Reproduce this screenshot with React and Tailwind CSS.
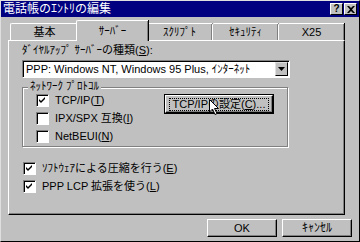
import React from 'react'

const jp = { fontFamily: '"Liberation Sans", "Noto Sans CJK JP", sans-serif' }

function Check({ checked, label }) {
  return (
    <div className="flex items-center gap-[6px] h-[18px] whitespace-nowrap">
      <div className="w-[13px] h-[13px] shrink-0 bg-white border-t border-l border-t-[#808080] border-l-[#808080] border-b border-r border-b-white border-r-white flex items-center justify-center shadow-[inset_1px_1px_0_#000]">
        {checked && (
          <svg width="9" height="9" viewBox="0 0 9 9">
            <path d="M1 3 L3 5 L7 1 L7 3 L3 7 L1 5 Z" fill="#000" />
          </svg>
        )}
      </div>
      <span className="text-[11px] text-black leading-none">{label}</span>
    </div>
  )
}

function Tab({ label, w, active }) {
  if (active) {
    return (
      <div className={`${w} h-[21px] -mb-[1px] -mx-[2px] z-10 bg-[#c0c0c0] border-l border-t border-white rounded-tl-[2px] shadow-[inset_-1px_0_0_#808080,1px_0_0_#000] flex items-center justify-center text-[11px] relative whitespace-nowrap`}>
        {label}
      </div>
    )
  }
  return (
    <div className={`${w} h-[17px] bg-[#c0c0c0] border-l border-t border-white rounded-tl-[2px] shadow-[inset_-1px_0_0_#808080,1px_0_0_#000] flex items-center justify-center text-[11px] whitespace-nowrap`}>
      {label}
    </div>
  )
}

function Button({ children, w, focused }) {
  return (
    <div className={`${w} h-[18px] bg-[#c0c0c0] border-t border-l border-white border-r border-b border-r-black border-b-black shadow-[inset_-1px_-1px_0_#808080] flex items-center justify-center text-[11px] whitespace-nowrap`}>
      {focused ? <div className="border border-dotted border-black px-[3px] leading-[11px]">{children}</div> : children}
    </div>
  )
}

export default function App() {
  return (
    <div style={jp} className="w-[360px] h-[242px] bg-[#c0c0c0] border-l border-t border-[#dfdfdf] border-r border-b border-r-black border-b-black overflow-hidden relative select-none">
      <div className="h-[16px] bg-[#000080] flex items-center justify-between pl-[2px] pr-[2px]">
        <span className="text-white text-[12px] leading-none">電話帳のｴﾝﾄﾘの編集</span>
        <div className="flex gap-[1px]">
          <div className="w-[13px] h-[12px] bg-[#c0c0c0] border-t border-l border-white border-r border-b border-r-black border-b-black text-[10px] font-bold flex items-center justify-center leading-none">?</div>
          <div className="w-[13px] h-[12px] bg-[#c0c0c0] border-t border-l border-white border-r border-b border-r-black border-b-black flex items-center justify-center">
            <svg width="8" height="7" viewBox="0 0 8 7"><path d="M0 0h2l2 2 2-2h2L5 3.5 8 7H6L4 5 2 7H0l3-3.5z" fill="#000" /></svg>
          </div>
        </div>
      </div>

      <div className="px-[7px] pt-[2px]">
        <div className="flex items-end h-[21px] pl-[2px]">
          <Tab label="基本" w="w-[68px]" />
          <Tab label="ｻｰﾊﾞｰ" w="w-[72px]" active />
          <Tab label="ｽｸﾘﾌﾟﾄ" w="w-[66px]" />
          <Tab label="ｾｷｭﾘﾃｨ" w="w-[66px]" />
          <Tab label="X25" w="w-[66px]" />
        </div>
        <div className="w-[337px] h-[175px] border-t border-l border-white border-r border-b border-r-black border-b-black shadow-[inset_-1px_-1px_0_#808080] px-[13px] pt-[4px]">
          <div className="text-[11px] leading-none h-[13px] whitespace-nowrap">ﾀﾞｲﾔﾙｱｯﾌﾟ ｻｰﾊﾞｰの種類(<u>S</u>):</div>
          <div className="mt-[2px] w-[268px] h-[18px] bg-white border-t border-l border-[#808080] border-r border-b border-r-white border-b-white shadow-[inset_1px_1px_0_#000] flex items-center justify-between pl-[3px] pr-[1px]">
            <span className="text-[11px] leading-none whitespace-nowrap">PPP: Windows NT, Windows 95 Plus, ｲﾝﾀｰﾈｯﾄ</span>
            <div className="w-[13px] h-[14px] bg-[#c0c0c0] border-t border-l border-[#dfdfdf] border-r border-b border-r-black border-b-black flex items-center justify-center">
              <svg width="7" height="4" viewBox="0 0 7 4"><path d="M0 0h7L3.5 4z" fill="#000" /></svg>
            </div>
          </div>

          <div className="relative mt-[9px] w-[266px] h-[60px] border border-[#808080] shadow-[1px_1px_0_#fff,inset_1px_1px_0_#fff] pl-[13px] pt-[3px]">
            <span className="absolute -top-[7px] left-[5px] px-[2px] bg-[#c0c0c0] text-[11px] leading-none whitespace-nowrap">ﾈｯﾄﾜｰｸ ﾌﾟﾛﾄｺﾙ</span>
            <div className="flex items-start">
              <div className="flex flex-col w-[118px]">
                <Check checked label={<>TCP/IP(<u>T</u>)</>} />
                <Check label={<>IPX/SPX 互換(<u>I</u>)</>} />
                <Check label={<>NetBEUI(<u>N</u>)</>} />
              </div>
              <div className="ml-[10px] mt-[3px]">
                <div className="border border-black">
                  <Button w="w-[108px]" focused>TCP/IPの設定(<u>C</u>)...</Button>
                </div>
              </div>
            </div>
          </div>

          <div className="mt-[12px] pl-[1px] flex flex-col">
            <Check checked label={<>ｿﾌﾄｳｪｱによる圧縮を行う(<u>E</u>)</>} />
            <Check checked label={<>PPP LCP 拡張を使う(<u>L</u>)</>} />
          </div>
        </div>

        <div className="flex justify-end gap-[5px] mt-[4px]">
          <Button w="w-[70px]">OK</Button>
          <Button w="w-[70px]"><span className="text-[12px]">ｷｬﾝｾﾙ</span></Button>
        </div>
      </div>

      <svg className="absolute left-[208px] top-[98px]" width="11" height="17" viewBox="0 0 11 17">
        <path d="M0.5 0.5 L0.5 13 L3.5 10 L6 15.5 L8 14.5 L5.5 9.5 L9.5 9.5 Z" fill="#fff" stroke="#000" strokeWidth="1" />
      </svg>
    </div>
  )
}
